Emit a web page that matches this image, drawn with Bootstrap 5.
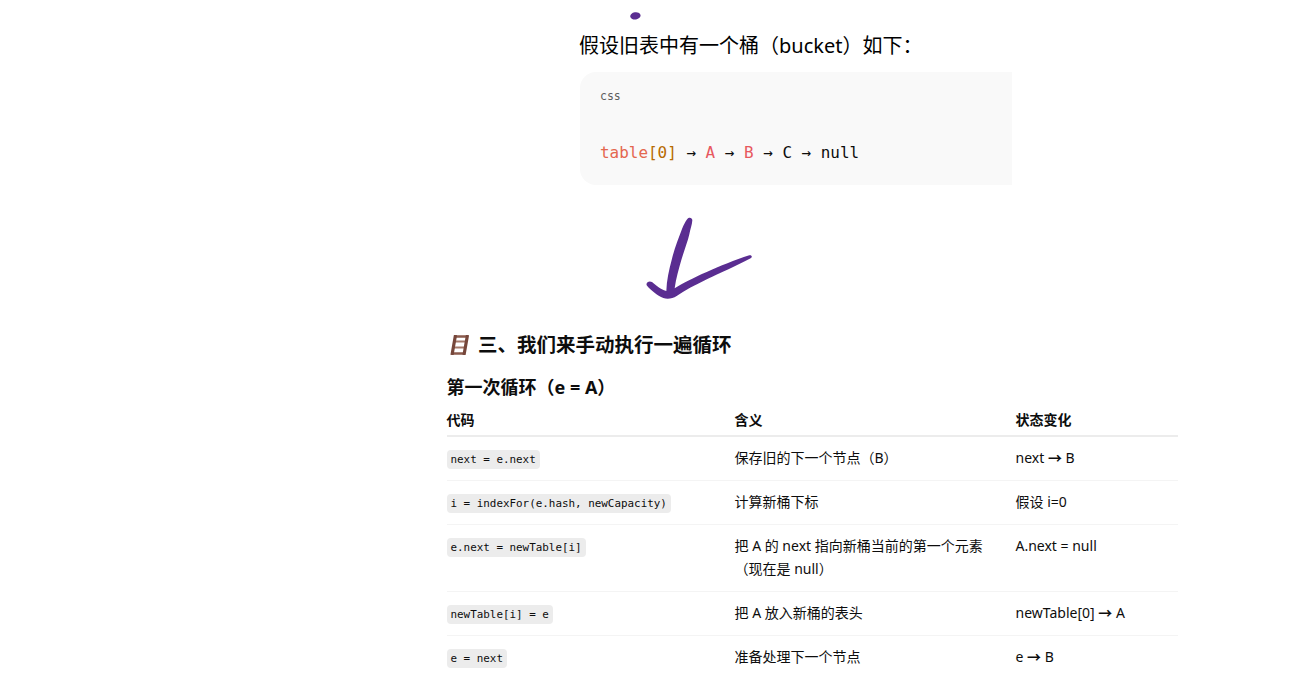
<!DOCTYPE html>
<html lang="zh">
<head>
<meta charset="utf-8">
<title>循环</title>
<link href="https://cdn.jsdelivr.net/npm/bootstrap@5.3.0/dist/css/bootstrap.min.css" rel="stylesheet">
<style>
html,body{height:699px;overflow:hidden;background:#fff}
body{font-family:"Noto Sans","Noto Sans CJK SC",sans-serif;color:#0d0d0d;font-size:14px}
.sheet{width:731px;margin-left:446.5px}
.inset{margin-left:132.5px;width:433px}
.scribble{display:block}
.dot{margin-left:51px;margin-top:12px}
.lede{font-size:20px;line-height:28px;margin:12px 0 12px;color:#000}
.snippet{background:#f9f9f9;border-radius:16px 0 0 16px;margin-left:1px;height:113px;padding:16px 20px 0;font-family:"DejaVu Sans Mono",monospace}
.lang{font-size:11.5px;line-height:16px;color:#5d5d5d}
.src{font-size:15.95px;line-height:24px;margin-top:37px;color:#0d0d0d;white-space:pre}
.t-orange{color:#b76b01}.t-pink{color:#e7585f}.t-table{color:#e4674f}
.arrow{margin:20px 0 0 183.5px}
.head3{font-size:19.5px;line-height:28px;font-weight:700;margin:21px 0 0;color:#0d0d0d;gap:9px}
.ladder{margin-left:3.5px;flex:none}
.head4{font-size:18px;line-height:26px;font-weight:700;margin:15px 0 0;color:#0d0d0d}
.grid-table{width:731px;table-layout:fixed;border-collapse:collapse;margin-top:10px}
.grid-table th{font-size:14px;font-weight:700;line-height:20px;padding:0 0 5px;border-bottom:2px solid #ececec;text-align:left}
.grid-table td{font-size:14px;line-height:23px;padding:9px 24px 11px 0;border-bottom:1px solid #f4f4f4;vertical-align:top}
.grid-table td:first-child{line-height:19px;padding-top:13px;padding-bottom:8px}
.grid-table tr:last-child td{border-bottom:0}
.chip{display:inline-block;vertical-align:top;font-family:"DejaVu Sans Mono",monospace;font-size:10.9px;line-height:13px;background:#ececec;border-radius:4px;padding:3px 4px;color:#0d0d0d}
.arw{font-family:"Noto Sans CJK SC",sans-serif;font-weight:700}
</style>
</head>
<body>
<div class="sheet">
  <div class="inset">
    <svg class="scribble dot" width="11" height="8" viewBox="0 0 11 8"><ellipse cx="5.4" cy="3.9" rx="5.2" ry="3.6" fill="#5b2d91" transform="rotate(-10 5.4 3.9)"/></svg>
    <p class="lede">假设旧表中有一个桶（bucket）如下：</p>
    <div class="snippet">
      <div class="lang">css</div>
      <div class="src"><span class="t-table">table</span><span class="t-orange">[0]</span> → <span class="t-pink">A</span> → <span class="t-pink">B</span> → C → null</div>
    </div>
  </div>
  <svg class="scribble arrow" width="135" height="105" viewBox="0 0 405 315" fill="#5a2d91"><path d="M172 42C176 36 187 37 187 46C186 60 181 72 178 88C173 110 163 135 154 165C147 190 138 220 134 250C180 222 270 180 358 151C366 150 368 157 362 160C320 182 270 205 232 222C195 240 165 256 140 273C128 281 112 283 100 279C82 272 62 256 50 241C47 232 58 226 66 231C78 240 90 253 109 258C110 225 117 195 125 165C133 130 146 100 156 72C161 60 166 50 172 42Z"/></svg>
  <h3 class="head3 d-flex align-items-center">
    <svg class="ladder" width="19" height="20" viewBox="0 0 19 20"><path d="M4.500 6.500H15.500M3.500 12.500H14.500" fill="none" stroke="#a5796a" stroke-width="2"/><path d="M5 1.500H18M1.500 18.500H14.500" fill="none" stroke="#8a5a4c" stroke-width="2.500"/><path d="M5.500 0L2 20M17.500 0L14 20" fill="none" stroke="#76473b" stroke-width="3.200"/></svg>
    <span>三、我们来手动执行一遍循环</span>
  </h3>
  <h4 class="head4">第一次循环（e = A）</h4>
  <table class="grid-table">
    <colgroup><col style="width:288px"><col style="width:281px"><col style="width:162px"></colgroup>
    <thead><tr><th>代码</th><th>含义</th><th>状态变化</th></tr></thead>
    <tbody>
      <tr><td><code class="chip">next = e.next</code></td><td>保存旧的下一个节点（B）</td><td>next <span class="arw">→</span> B</td></tr>
      <tr><td><code class="chip">i = indexFor(e.hash, newCapacity)</code></td><td>计算新桶下标</td><td>假设 i=0</td></tr>
      <tr><td><code class="chip">e.next = newTable[i]</code></td><td>把 A 的 next 指向新桶当前的第一个元素（现在是 null）</td><td>A.next = null</td></tr>
      <tr><td><code class="chip">newTable[i] = e</code></td><td>把 A 放入新桶的表头</td><td>newTable[0] <span class="arw">→</span> A</td></tr>
      <tr><td><code class="chip">e = next</code></td><td>准备处理下一个节点</td><td>e <span class="arw">→</span> B</td></tr>
    </tbody>
  </table>
</div>
<script src="https://cdn.jsdelivr.net/npm/bootstrap@5.3.0/dist/js/bootstrap.bundle.min.js"></script>
</body>
</html>
